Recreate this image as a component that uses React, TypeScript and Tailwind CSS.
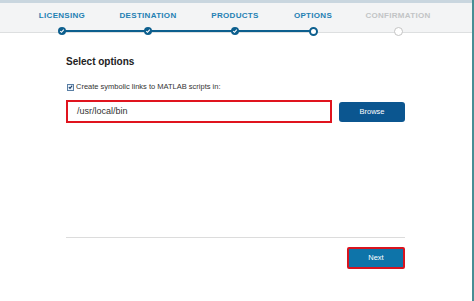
import React from 'react';

type Step = { label: string; width: string; state: 'done' | 'current' | 'todo' };

const steps: Step[] = [
  { label: 'LICENSING', width: 'w-[86px]', state: 'done' },
  { label: 'DESTINATION', width: 'w-[86px]', state: 'done' },
  { label: 'PRODUCTS', width: 'w-[88px]', state: 'done' },
  { label: 'OPTIONS', width: 'w-[68px]', state: 'current' },
  { label: 'CONFIRMATION', width: 'w-[102px]', state: 'todo' },
];

const Dot: React.FC<{ state: Step['state'] }> = ({ state }) => {
  if (state === 'done') {
    return (
      <span className="w-[8px] h-[8px] rounded-full bg-[#0d5f8e] flex items-center justify-center">
        <svg width="6" height="6" viewBox="0 0 6 6">
          <path d="M1.2 3.2 L2.5 4.3 L4.8 1.6" stroke="#fff" strokeWidth="1.1" fill="none" />
        </svg>
      </span>
    );
  }
  if (state === 'current') {
    return <span className="block w-[9px] h-[9px] rounded-full bg-white border-2 border-[#0d5f8e]" />;
  }
  return <span className="block w-[9px] h-[9px] rounded-full bg-white border-[1.5px] border-[#c4c4c4]" />;
};

const App: React.FC = () => {
  return (
    <div className="w-[474px] h-[301px] flex bg-white overflow-hidden" style={{ fontFamily: '"Liberation Sans", Arial, sans-serif' }}>
      <div className="w-[472px] flex flex-col">
        {/* bandeau du haut */}
        <div className="h-[3px] bg-[#c9d6df]" />

        {/* étapes */}
        <div className="relative h-[30px] bg-[#f3f4f5] border-b border-[#dddfe0]">
          <div className="absolute left-[62px] top-[27px] w-[251px] h-[2px] bg-[#0d5f8e]" />
          <div className="relative z-10 flex pl-[19px]">
            {steps.map(s => (
              <div key={s.label} className={`${s.width} flex flex-col items-center`}>
                <span
                  className={`mt-[8px] text-[8px] leading-[10px] font-bold tracking-[0.3px] ${
                    s.state === 'todo' ? 'text-[#c2c4c6]' : 'text-[#2380b3]'
                  }`}
                >
                  {s.label}
                </span>
                <div className="mt-[6px]">
                  <Dot state={s.state} />
                </div>
              </div>
            ))}
          </div>
        </div>

        {/* contenu */}
        <div className="flex-1 flex flex-col pl-[66px] w-[405px]">
          <h2 className="mt-[23px] text-[10px] leading-[12px] font-bold text-[#222]">Select options</h2>

          <label className="mt-[14px] flex items-center gap-[2px] text-[7.5px] leading-[10px] text-[#333]">
            <span className="ml-[1px] w-[7px] h-[7px] border border-[#5a7fa5] bg-[#eaf2fb] flex items-center justify-center">
              <svg width="6" height="6" viewBox="0 0 6 6">
                <path d="M1 3.2 L2.4 4.6 L5 1.3" stroke="#1d3f66" strokeWidth="1.3" fill="none" />
              </svg>
            </span>
            Create symbolic links to MATLAB scripts in:
          </label>

          <div className="mt-[8px] flex items-center gap-[7px]">
            <div className="w-[266px] h-[23px] border-2 border-[#e0141e] bg-white flex items-center pl-[9px] text-[9px] text-[#333]">
              /usr/local/bin
            </div>
            <button className="w-[66px] h-[20px] rounded-[3px] bg-[#0b5690] text-white text-[7.5px]">Browse</button>
          </div>

          <div className="mt-[114px] h-px bg-[#dcdcdc]" />

          <div className="mt-[9px] flex justify-end">
            <div className="border-2 border-[#d8141f] rounded-[2px]">
              <button className="w-[54px] h-[18px] bg-[#0e74a9] text-white text-[7.5px] block">Next</button>
            </div>
          </div>
        </div>
      </div>
      <div className="w-[2px] bg-[#478e94]" />
    </div>
  );
};

export default App;
